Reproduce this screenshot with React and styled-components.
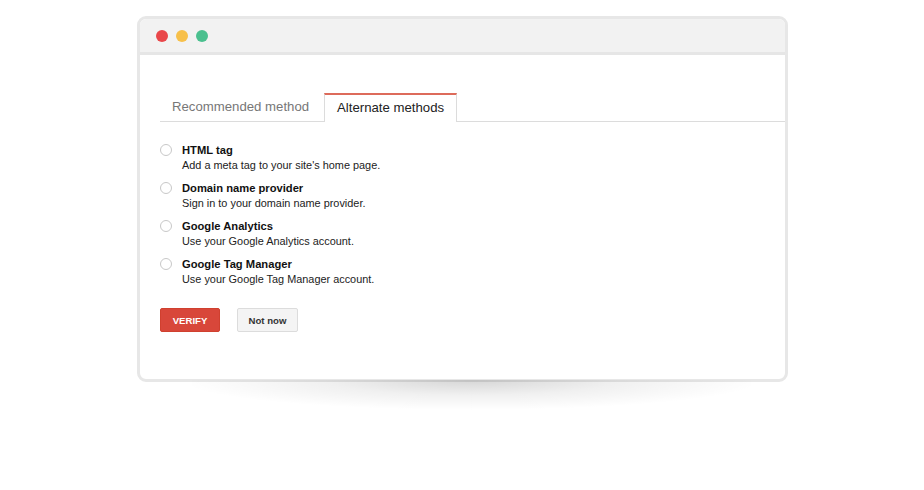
import styled, { createGlobalStyle } from "styled-components";

const Global = createGlobalStyle`
  html, body {
    margin: 0;
    background: #ffffff;
  }
  body {
    font-family: "Liberation Sans", Arial, Helvetica, sans-serif;
    color: #222;
  }
`;

const methods = [
  { title: "HTML tag", text: "Add a meta tag to your site's home page." },
  { title: "Domain name provider", text: "Sign in to your domain name provider." },
  { title: "Google Analytics", text: "Use your Google Analytics account." },
  { title: "Google Tag Manager", text: "Use your Google Tag Manager account." },
];

const App = () => {
  return (
    <Page>
      <Global />
      <Window>
        <TitleBar>
          <Dot color="#e9474a" />
          <Dot color="#f7c04a" />
          <Dot color="#4bc08f" />
        </TitleBar>
        <Content>
          <Tabs>
            <Tab>Recommended method</Tab>
            <Tab active>Alternate methods</Tab>
          </Tabs>
          <Options>
            {methods.map((m) => (
              <Option key={m.title}>
                <Radio />
                <div>
                  <OptionTitle>{m.title}</OptionTitle>
                  <OptionText>{m.text}</OptionText>
                </div>
              </Option>
            ))}
          </Options>
          <Actions>
            <Button primary>VERIFY</Button>
            <Button>Not now</Button>
          </Actions>
        </Content>
      </Window>
    </Page>
  );
};

const Page = styled.div`
  padding: 16px 0 0 137px;
  height: 474px;
`;

const Window = styled.div`
  position: relative;
  box-sizing: border-box;
  width: 651px;
  height: 366px;
  border: 3px solid #e7e7e7;
  border-radius: 9px;
  background: #fff;

  &::after {
    content: "";
    position: absolute;
    left: 52px;
    right: 34px;
    top: calc(100% + 1px);
    height: 30px;
    background: radial-gradient(
      ellipse 52% 100% at 50% 0%,
      rgba(0, 0, 0, 0.16),
      rgba(0, 0, 0, 0.06) 50%,
      rgba(0, 0, 0, 0) 100%
    );
  }
`;

const TitleBar = styled.div`
  display: flex;
  align-items: center;
  gap: 8px;
  height: 33px;
  padding-left: 16px;
  background: #f2f2f2;
  border-bottom: 3px solid #e6e6e6;
  border-radius: 6px 6px 0 0;
`;

const Dot = styled.span`
  width: 12px;
  height: 12px;
  border-radius: 50%;
  background: ${(p) => p.color};
`;

const Content = styled.div`
  padding: 38px 0 0 20px;
`;

const Tabs = styled.div`
  display: flex;
  align-items: flex-end;
  height: 28px;
  border-bottom: 1px solid #dcdcdc;
`;

const Tab = styled.div`
  box-sizing: border-box;
  height: ${(p) => (p.active ? "29px" : "28px")};
  margin-bottom: ${(p) => (p.active ? "-1px" : "0")};
  padding: ${(p) => (p.active ? "5px 12px 0" : "6px 15px 0 12px")};
  font-size: 13.2px;
  color: ${(p) => (p.active ? "#222" : "#777")};
  background: #fff;
  border-top: ${(p) => (p.active ? "2px solid #dd6b5b" : "none")};
  border-left: ${(p) => (p.active ? "1px solid #dcdcdc" : "none")};
  border-right: ${(p) => (p.active ? "1px solid #dcdcdc" : "none")};
  white-space: nowrap;
`;

const Options = styled.div`
  display: flex;
  flex-direction: column;
  gap: 8px;
  padding-top: 21px;
`;

const Option = styled.div`
  display: flex;
  align-items: flex-start;
  gap: 10px;
`;

const Radio = styled.span`
  box-sizing: border-box;
  flex: none;
  width: 12px;
  height: 12px;
  margin-top: 1px;
  border: 1px solid #c8c8c8;
  border-radius: 50%;
  background: #fff;
`;

const OptionTitle = styled.div`
  font-size: 11.2px;
  font-weight: bold;
  line-height: 15px;
  color: #111;
`;

const OptionText = styled.div`
  font-size: 10.9px;
  line-height: 15px;
  color: #222;
`;

const Actions = styled.div`
  display: flex;
  gap: 17px;
  padding-top: 21px;
`;

const Button = styled.div`
  box-sizing: border-box;
  display: flex;
  align-items: center;
  justify-content: center;
  width: ${(p) => (p.primary ? "60px" : "61px")};
  height: 24px;
  font-size: 9.6px;
  font-weight: bold;
  border-radius: 2px;
  color: ${(p) => (p.primary ? "#fff" : "#333")};
  background: ${(p) => (p.primary ? "#d8473a" : "#f4f4f4")};
  border: 1px solid ${(p) => (p.primary ? "#d0402f" : "#dcdcdc")};
`;

export default App;
